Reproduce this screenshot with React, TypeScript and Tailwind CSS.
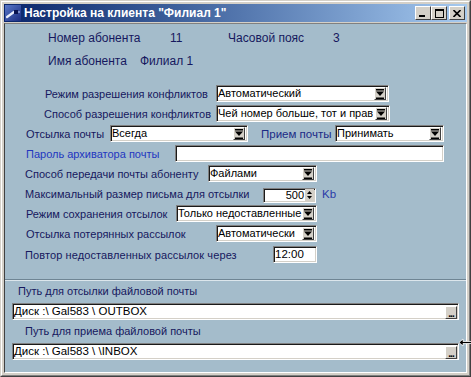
import React from "react";

const sunken =
  "border border-t-[#808080] border-l-[#808080] border-r-white border-b-white shadow-[inset_1px_1px_0_#1a1a1a,inset_-1px_-1px_0_#d4d0c8]";

function DropBtn() {
  return (
    <div className="w-[12px] h-[13px] mr-[2px] shrink-0 bg-[#d4d0c8] border border-t-white border-l-white border-r-[#404040] border-b-[#404040] flex items-center justify-center">
      <svg width="8" height="10" viewBox="0 0 8 10">
        <rect x="0" y="0" width="8" height="1.5" fill="#000" />
        <polygon points="0,2.5 8,2.5 4,7" fill="#000" />
        <rect x="0" y="8.5" width="8" height="1.5" fill="#000" />
      </svg>
    </div>
  );
}

function Select({ className, value }: { className: string; value: string }) {
  return (
    <div className={`h-[17px] flex items-center bg-white shrink-0 ${sunken} ${className}`}>
      <span className="flex-1 pl-[1px] whitespace-nowrap overflow-hidden text-black text-[11px] leading-[15px]">{value}</span>
      <DropBtn />
    </div>
  );
}

function PathInput({ value }: { value: string }) {
  return (
    <div className={`ml-[7px] w-[447px] h-[17px] flex items-center bg-white ${sunken}`}>
      <span className="flex-1 pl-[1px] whitespace-nowrap overflow-hidden text-black text-[11.5px] leading-[15px]">{value}</span>
      <div className="w-[12px] h-[13px] mr-[1px] mt-[2px] bg-[#d4d0c8] border border-t-white border-l-white border-r-[#404040] border-b-[#404040] flex items-end justify-center">
        <span className="text-[10px] leading-[8px] text-black font-bold tracking-[-1px]">...</span>
      </div>
    </div>
  );
}

function Row({ children, className = "" }: { children: React.ReactNode; className?: string }) {
  return <div className={`h-[17px] flex items-center whitespace-nowrap ${className}`}>{children}</div>;
}

const lbl = "text-[#16185e] text-[11px] leading-[16px] shrink-0";

export default function App() {
  return (
    <div className="w-[471px] h-[377px] bg-[#d4d0c8] border border-t-[#d4d0c8] border-l-[#d4d0c8] border-r-[#404040] border-b-[#404040] font-['Liberation_Sans',Arial,sans-serif] text-[12px] relative">
      <div className="w-full h-full border border-t-white border-l-white border-r-[#808080] border-b-[#808080] p-[2px] flex flex-col">
        {/* Title bar */}
        <div className="h-[18px] shrink-0 flex items-center bg-gradient-to-r from-[#0a246a] to-[#a6caf0]">
          <svg width="16" height="16" viewBox="0 0 16 16" className="ml-[1px] shrink-0">
            <defs>
              <linearGradient id="ig" x1="0" y1="0" x2="1" y2="1">
                <stop offset="0" stopColor="#5a78c8" />
                <stop offset="1" stopColor="#1a2c80" />
              </linearGradient>
            </defs>
            <rect x="0" y="0" width="16" height="16" fill="url(#ig)" />
            <path d="M2 12 L9 7" stroke="#e8eefc" strokeWidth="2.2" strokeLinecap="round" />
            <rect x="9" y="5" width="4" height="4" fill="#0a1450" />
            <path d="M13 7 L15 7" stroke="#c8d4f4" strokeWidth="1" />
          </svg>
          <span className="ml-[3px] text-white font-bold text-[12px] leading-[16px] whitespace-nowrap">
            Настройка на клиента "Филиал 1"
          </span>
          <div className="flex-1" />
          <div className="flex items-center mr-[2px]">
            <div className="w-[16px] h-[14px] bg-[#d4d0c8] border border-t-white border-l-white border-r-[#404040] border-b-[#404040] flex items-end justify-start">
              <div className="ml-[3px] mb-[2px] w-[6px] h-[2px] bg-black" />
            </div>
            <div className="w-[16px] h-[14px] bg-[#d4d0c8] border border-t-white border-l-white border-r-[#404040] border-b-[#404040] flex items-center justify-center">
              <div className="w-[9px] h-[9px] border border-black border-t-2" />
            </div>
            <div className="ml-[2px] w-[16px] h-[14px] bg-[#d4d0c8] border border-t-white border-l-white border-r-[#404040] border-b-[#404040] flex items-center justify-center">
              <svg width="8" height="7" viewBox="0 0 8 7">
                <path d="M0.5 0 L7.5 7 M7.5 0 L0.5 7" stroke="#000" strokeWidth="1.6" />
              </svg>
            </div>
          </div>
        </div>

        {/* Body */}
        <div className="mt-[1px] flex-1 bg-[#a4bccb] border border-t-[#808080] border-l-[#404040] border-r-white border-b-white flex flex-col">
          {/* subscriber info */}
          <div className="mt-[6px] h-[16px] flex items-center whitespace-nowrap text-[#16185e] leading-[16px]">
            <span className="ml-[43px] w-[122px]">Номер абонента</span>
            <span className="w-[58px]">11</span>
            <span className="w-[105px]">Часовой пояс</span>
            <span>3</span>
          </div>
          <div className="mt-[7px] h-[16px] flex items-center whitespace-nowrap text-[#16185e] leading-[16px]">
            <span className="ml-[43px] w-[92px]">Имя абонента</span>
            <span>Филиал 1</span>
          </div>

          <div className="mt-[16px] flex flex-col gap-[3px]">
            <Row>
              <span className={`${lbl} ml-[40px] w-[171px] text-[11.5px]`}>Режим разрешения конфликтов</span>
              <Select className="w-[173px]" value="Автоматический" />
            </Row>
            <Row>
              <span className={`${lbl} ml-[39px] w-[172px] text-[11.5px]`}>Способ разрешения конфликтов</span>
              <Select className="w-[174px]" value="Чей номер больше, тот и прав" />
            </Row>
            <Row>
              <span className={`${lbl} ml-[21px] w-[84px] text-[11.5px]`}>Отсылка почты</span>
              <Select className="w-[138px]" value="Всегда" />
              <span className="ml-[13px] w-[74px] text-[#1b2a86] text-[11.5px] leading-[16px] shrink-0">Прием почты</span>
              <Select className="w-[109px]" value="Принимать" />
            </Row>
            <Row>
              <span className={`ml-[21px] w-[149px] text-[#2236c0] text-[11px] leading-[16px] shrink-0`}>Пароль архиватора почты</span>
              <div className={`h-[17px] w-[269px] bg-white ${sunken}`} />
            </Row>
            <Row>
              <span className={`${lbl} ml-[20px] w-[183px]`}>Способ передачи почты абоненту</span>
              <Select className="w-[109px]" value="Файлами" />
            </Row>
            <Row>
              <span className={`${lbl} ml-[20px] w-[238px]`}>Максимальный размер письма для отсылки</span>
              <div className={`mt-[3px] h-[15px] w-[53px] bg-white flex items-center ${sunken}`}>
                <span className="flex-1 text-right text-black text-[11px] leading-[13px] pr-[1px]">500</span>
                <div className="w-[9px] h-[12px] mr-[1px] flex flex-col items-center justify-center gap-[2px] bg-[#d4d0c8]">
                  <svg width="5" height="3" viewBox="0 0 5 3">
                    <polygon points="0,3 5,3 2.5,0" fill="#000" />
                  </svg>
                  <svg width="5" height="3" viewBox="0 0 5 3">
                    <polygon points="0,0 5,0 2.5,3" fill="#000" />
                  </svg>
                </div>
              </div>
              <span className="ml-[6px] mt-[1px] text-[#2a3aa8] text-[11.5px] leading-[16px]">Kb</span>
            </Row>
            <Row>
              <span className={`${lbl} ml-[21px] w-[150px]`}>Режим сохранения отсылок</span>
              <Select className="w-[141px]" value="Только недоставленные" />
            </Row>
            <Row>
              <span className={`${lbl} ml-[21px] w-[190px]`}>Отсылка потерянных рассылок</span>
              <Select className="w-[101px]" value="Автоматически" />
            </Row>
            <Row className="mt-[1px]">
              <span className={`${lbl} ml-[20px] w-[248px] tracking-[0.1px]`}>Повтор недоставленных рассылок через</span>
              <div className={`h-[17px] w-[44px] bg-white flex items-center ${sunken}`}>
                <span className="pl-[1px] text-black text-[11.5px] leading-[15px]">12:00</span>
              </div>
            </Row>
          </div>

          {/* separator */}
          <div className="mt-[16px] h-[2px] border-t border-t-[#6f8594] border-b border-b-[#dce6ec]" />

          <div className="mt-[2px] h-[16px] flex items-center">
            <span className={`${lbl} ml-[13px] text-[11.5px]`}>Путь для отсылки файловой почты</span>
          </div>
          <div className="mt-[4px]">
            <PathInput value="Диск :\ Gal583 \ OUTBOX" />
          </div>
          <div className="mt-[3px] h-[16px] flex items-center">
            <span className={`${lbl} ml-[20px] text-[11.5px]`}>Путь для приема файловой почты</span>
          </div>
          <div className="mt-[4px]">
            <PathInput value="Диск :\ Gal583 \ \INBOX" />
          </div>
        </div>
      </div>

      {/* mouse cursor overlay */}
      <svg width="14" height="9" viewBox="0 0 14 9" className="absolute left-[457px] top-[337px]">
        <path d="M1 4.5 L5 1 L5 3.5 L14 3.5 L14 5.5 L5 5.5 L5 8 Z" fill="#000" stroke="#fff" strokeWidth="0.8" />
      </svg>
    </div>
  );
}
